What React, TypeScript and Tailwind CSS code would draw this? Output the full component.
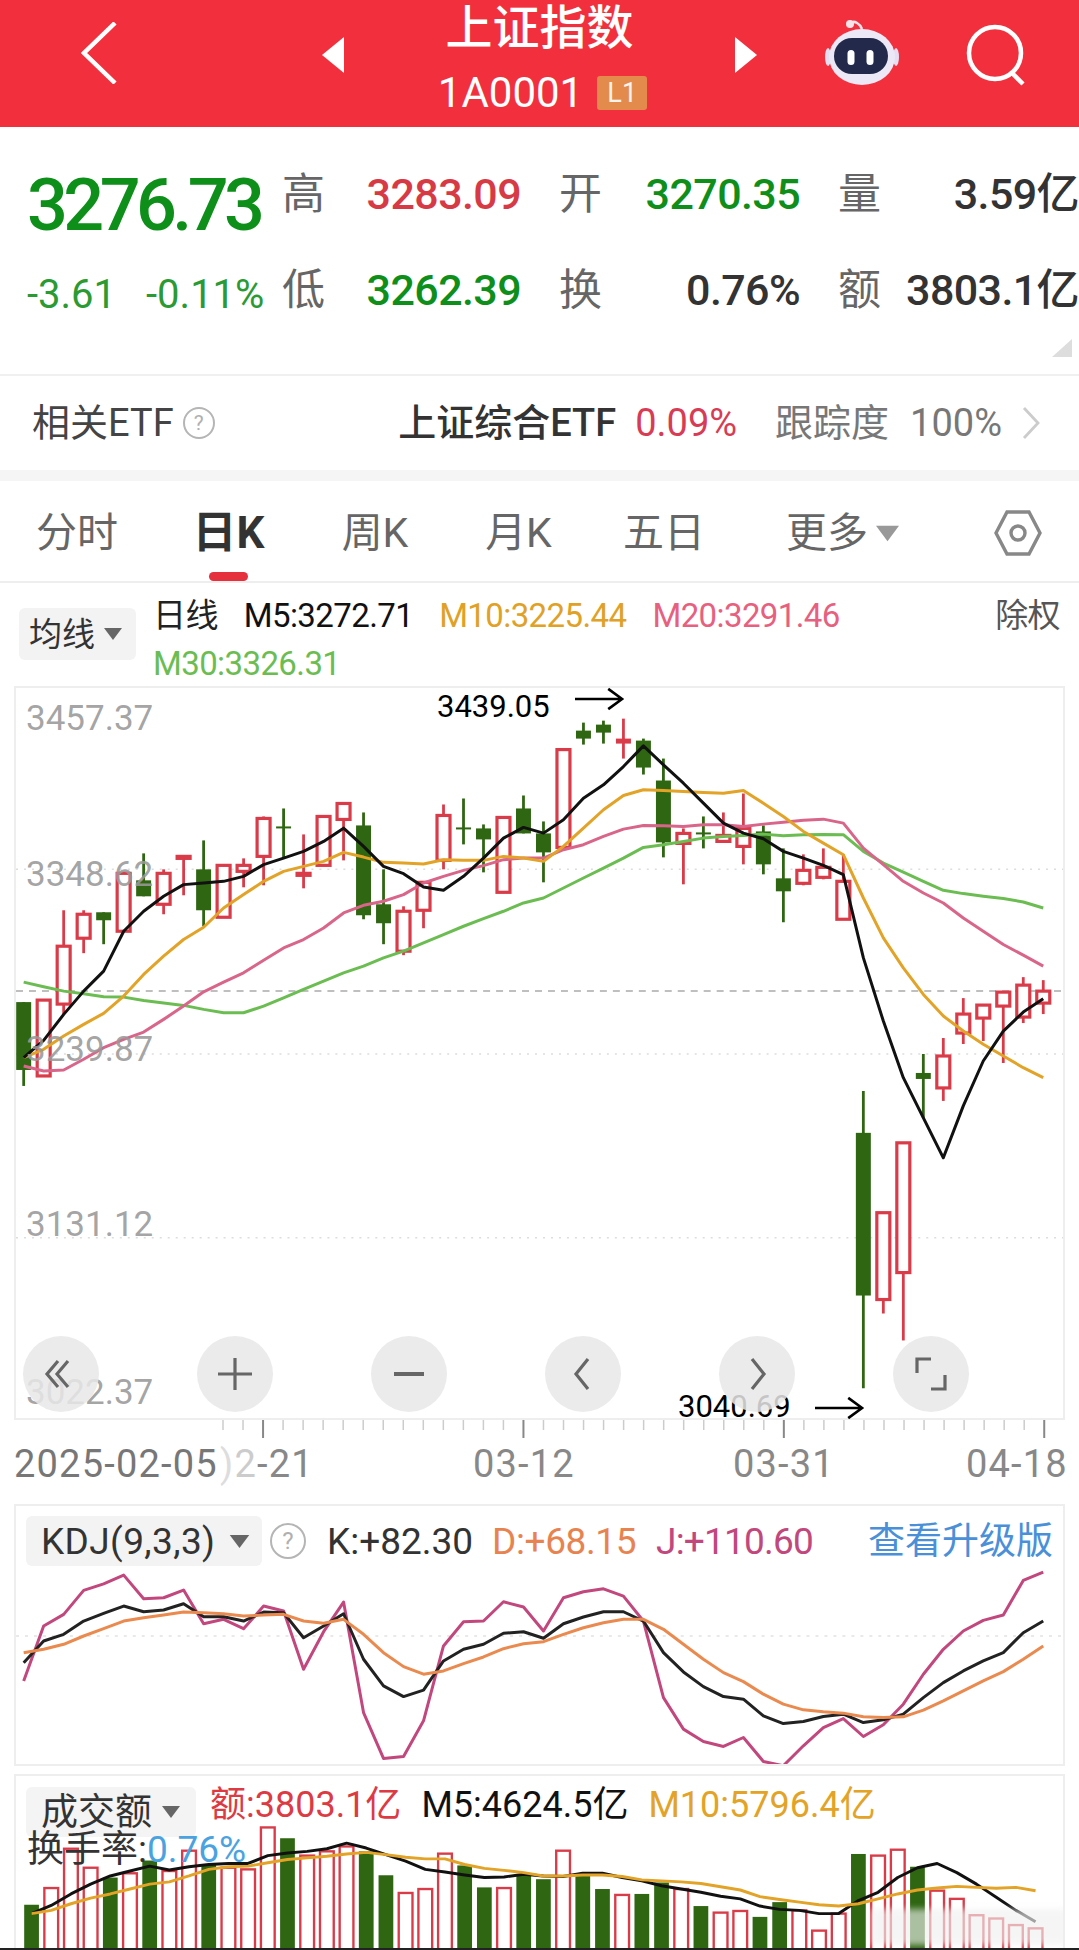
const RED = "#d93b48";
const GREEN = "#2f6612";

// candle x position shared by all three panels
const cx = (i: number) => 22.7 + 20.03 * i;

// kind, high, top, bottom, low (page px)
type Candle = ["g" | "r" | "f", number, number, number, number];
const candles: Candle[] = [
  ["g", 1001, 1001, 1069, 1085], ["r", 999, 999, 1075, 1075], ["r", 909, 945, 1003, 1013], ["r", 909, 913, 937, 952],
  ["g", 911, 911, 919, 943], ["r", 872, 872, 930, 930], ["g", 852, 879, 895, 895], ["r", 868, 872, 903, 913],
  ["r", 855, 855, 857, 894], ["g", 839, 868, 909, 925], ["r", 864, 864, 916, 916], ["r", 857, 864, 870, 886],
  ["r", 815, 817, 855, 884], ["g", 807, 825, 827, 857], ["r", 833, 872, 874, 887], ["r", 815, 815, 864, 864],
  ["r", 802, 802, 818, 859], ["g", 811, 824, 914, 918], ["g", 868, 903, 922, 943], ["r", 905, 910, 950, 954],
  ["r", 880, 881, 909, 927], ["r", 803, 814, 859, 868], ["g", 797, 826, 828, 843], ["g", 823, 827, 838, 871],
  ["r", 816, 816, 891, 891], ["g", 794, 807, 832, 832], ["g", 820, 832, 851, 881], ["r", 748, 748, 846, 846],
  ["g", 721, 729, 737, 743], ["g", 719, 723, 731, 742], ["f", 717, 737, 742, 757], ["g", 737, 739, 766, 773],
  ["g", 757, 779, 841, 856], ["r", 827, 832, 842, 883], ["g", 815, 831, 833, 847], ["r", 811, 834, 840, 840],
  ["r", 792, 827, 845, 863], ["g", 824, 830, 863, 873], ["g", 847, 877, 890, 921], ["r", 853, 869, 882, 884],
  ["r", 847, 866, 876, 878], ["r", 853, 880, 918, 918], ["g", 1090, 1132, 1295, 1388], ["r", 1212, 1212, 1299, 1313],
  ["r", 1142, 1142, 1272, 1340], ["g", 1053, 1072, 1078, 1117], ["r", 1037, 1055, 1087, 1100], ["r", 997, 1013, 1032, 1043],
  ["r", 1003, 1004, 1017, 1040], ["r", 991, 991, 1005, 1062], ["r", 976, 984, 1016, 1022], ["r", 979, 990, 1002, 1013],
];

const toPage = (base: number, v: number) => base + v / 3;

const m5 = [1130, 1078, 1000, 930, 870, 750, 690, 645, 610, 605, 600, 585, 550, 530, 510, 480, 440, 495, 555, 577, 617, 627, 585, 530, 470, 438, 455, 415, 350, 310, 255, 193, 250, 305, 365, 425, 455, 472, 510, 530, 552, 580, 830, 1020, 1190, 1311, 1431, 1275, 1140, 1050, 993, 953];
const m10 = [1130, 1105, 1065, 1030, 997, 945, 880, 825, 775, 738, 680, 640, 600, 570, 555, 540, 513, 527, 543, 545, 548, 535, 537, 537, 525, 530, 540, 495, 440, 385, 342, 325, 327, 330, 333, 335, 327, 365, 405, 450, 485, 520, 650, 770, 860, 940, 1005, 1050, 1090, 1125, 1160, 1190];
const m20 = [1155, 1170, 1167, 1135, 1100, 1075, 1053, 1015, 975, 932, 903, 875, 837, 800, 775, 740, 695, 672, 660, 640, 605, 585, 567, 553, 535, 530, 530, 505, 490, 465, 443, 432, 433, 435, 430, 430, 435, 428, 422, 416, 413, 425, 500, 550, 600, 635, 665, 710, 750, 790, 822, 855];
const m30 = [903, 917, 930, 938, 947, 948, 958, 966, 973, 985, 995, 995, 975, 950, 925, 900, 875, 855, 830, 810, 785, 760, 735, 712, 690, 665, 650, 620, 590, 560, 530, 498, 490, 480, 470, 465, 462, 458, 463, 460, 459, 460, 510, 545, 572, 600, 627, 637, 645, 652, 662, 680];

const kLine = [485, 420, 400, 360, 337, 315, 332, 327, 308, 347, 347, 360, 333, 335, 410, 375, 338, 475, 555, 587, 568, 480, 445, 430, 397, 392, 412, 368, 348, 332, 332, 360, 455, 513, 557, 587, 595, 645, 668, 662, 647, 640, 665, 657, 640, 590, 545, 510, 480, 455, 395, 360];
const dLine = [455, 445, 430, 405, 383, 360, 350, 342, 333, 335, 338, 345, 342, 340, 360, 367, 355, 400, 455, 497, 520, 510, 488, 468, 443, 428, 422, 400, 380, 365, 355, 355, 385, 430, 475, 515, 542, 580, 610, 627, 633, 637, 648, 650, 648, 628, 600, 570, 540, 512, 475, 435];
const jLine = [540, 375, 340, 268, 248, 222, 293, 290, 267, 368, 355, 383, 315, 330, 505, 392, 303, 635, 773, 767, 660, 435, 362, 360, 302, 318, 390, 290, 272, 263, 285, 360, 590, 685, 722, 737, 710, 782, 795, 735, 680, 653, 707, 672, 610, 520, 445, 390, 358, 342, 238, 213];

// true = green solid bar
const volumes: [boolean, number][] = [
  [true, 1218], [false, 1167], [false, 1047], [false, 1105], [true, 1135], [false, 1122], [true, 1083], [false, 1115], [false, 1053], [true, 1095],
  [false, 1105], [false, 1110], [false, 982], [true, 1015], [false, 1068], [false, 1055], [false, 1040], [true, 1055], [true, 1128], [false, 1182],
  [false, 1170], [false, 1062], [true, 1098], [true, 1165], [false, 1167], [true, 1125], [true, 1140], [false, 1053], [true, 1130], [true, 1170],
  [false, 1188], [true, 1185], [true, 1150], [false, 1170], [true, 1222], [false, 1242], [false, 1237], [true, 1255], [true, 1210], [false, 1235],
  [false, 1297], [false, 1245], [true, 1063], [false, 1068], [false, 1050], [true, 1102], [false, 1175], [false, 1200], [false, 1250], [false, 1260],
  [false, 1280], [false, 1290],
];
const volM5 = [1245, 1220, 1185, 1155, 1130, 1115, 1100, 1112, 1102, 1095, 1092, 1092, 1068, 1060, 1055, 1047, 1030, 1045, 1065, 1085, 1110, 1118, 1127, 1135, 1133, 1125, 1130, 1132, 1122, 1122, 1135, 1145, 1160, 1170, 1180, 1192, 1200, 1222, 1232, 1235, 1245, 1245, 1205, 1180, 1135, 1105, 1092, 1120, 1155, 1195, 1235, 1270];
const volM10 = [1245, 1235, 1215, 1198, 1185, 1170, 1155, 1148, 1130, 1110, 1102, 1100, 1090, 1080, 1075, 1070, 1063, 1058, 1065, 1073, 1078, 1078, 1095, 1107, 1113, 1120, 1130, 1130, 1127, 1127, 1132, 1142, 1145, 1148, 1153, 1163, 1173, 1193, 1202, 1210, 1218, 1222, 1215, 1200, 1185, 1173, 1167, 1162, 1165, 1168, 1165, 1175];

function Series({ data, base, color, width = 3 }: { data: number[]; base: number; color: string; width?: number }) {
  const points = data.map((v, i) => `${cx(i).toFixed(1)},${toPage(base, v).toFixed(1)}`).join(" ");
  return <polyline points={points} fill="none" stroke={color} strokeWidth={width} strokeLinejoin="round" />;
}

function Caret({ className }: { className: string }) {
  return (
    <svg viewBox="0 0 18 12" className={className}>
      <path d="M0 0h18L9 12Z" fill="currentColor" />
    </svg>
  );
}

function QuestionMark({ className }: { className: string }) {
  return (
    <span className={`flex items-center justify-center rounded-full border-2 border-[#b5b5b5] text-[#b0b0b0] ${className}`}>
      ?
    </span>
  );
}

function Stat({ label, value, color }: { label: string; value: string; color: string }) {
  return (
    <div className="flex h-12 items-center justify-between">
      <span className="text-[43px] leading-none text-[#666]">{label}</span>
      <span className={`text-[43px] font-medium leading-none tracking-[-0.6px] ${color}`}>{value}</span>
    </div>
  );
}

function Arrow({ className }: { className: string }) {
  return (
    <svg viewBox="0 0 52 26" className={className} fill="none" stroke="#000" strokeWidth="2.8">
      <path d="M0 13h50M36 2l15 11-15 11" />
    </svg>
  );
}

function RoundButton({ children }: { children: React.ReactNode }) {
  return (
    <div className="flex h-[76px] w-[76px] items-center justify-center rounded-full bg-[#e8e8e8]/85">
      <svg viewBox="0 0 40 40" className="h-10 w-10" fill="none" stroke="#666" strokeWidth="3.2">
        {children}
      </svg>
    </div>
  );
}

function PriceLabel({ y, children }: { y: string; children: string }) {
  return <span className={`absolute left-[10px] text-[35px] leading-none text-[#999]/90 ${y}`}>{children}</span>;
}

function PriceChart() {
  return (
    <div className="relative mx-[14px] h-[734px] border-2 border-[#eee]">
      <svg viewBox="15 687 1049 730" className="absolute inset-0 block h-full w-full">
        {[868, 1053, 1237].map((y) => (
          <line key={y} x1="15" x2="1064" y1={y} y2={y} stroke="#ddd" strokeWidth="1.5" strokeDasharray="2 6" />
        ))}
        <line x1="15" x2="1064" y1="990" y2="990" stroke="#aaa" strokeWidth="1.5" strokeDasharray="7 6" />
        {candles.map(([kind, high, top, bottom, low], i) => {
          const x = cx(i);
          const color = kind === "g" ? GREEN : RED;
          return (
            <g key={i}>
              <line x1={x} x2={x} y1={high} y2={low} stroke={color} strokeWidth="2.8" />
              {kind === "r" ? (
                <rect x={x - 6.5} y={top} width="13" height={bottom - top} fill="#fff" stroke={color} strokeWidth="3.2" />
              ) : (
                <rect x={x - 7.5} y={top} width="15" height={bottom - top} fill={color} />
              )}
            </g>
          );
        })}
        <Series data={m30} base={680} color="#6bbd52" />
        <Series data={m20} base={680} color="#d9668a" />
        <Series data={m10} base={680} color="#e2a326" />
        <Series data={m5} base={680} color="#111" />
      </svg>

      <PriceLabel y="top-[13px]">3457.37</PriceLabel>
      <PriceLabel y="top-[169px]">3348.62</PriceLabel>
      <PriceLabel y="top-[344px]">3239.87</PriceLabel>
      <PriceLabel y="top-[519px]">3131.12</PriceLabel>
      <PriceLabel y="top-[687px]">3022.37</PriceLabel>

      <span className="absolute left-[421px] top-[3px] text-[31px] leading-[32px] text-black">3439.05</span>
      <Arrow className="absolute left-[557px] top-[-1px] h-6 w-[52px]" />

      <span className="absolute left-[662px] top-[703px] text-[31px] leading-[32px] text-black">3040.69</span>
      <Arrow className="absolute left-[797px] top-[708px] h-6 w-[52px]" />

      {/* zoom and pan buttons float over the chart */}
      <div className="absolute left-[7px] top-[648px] flex gap-[98px]">
        <RoundButton>
          <path d="M17 7 6 20l11 13M27 7 16 20l11 13" />
        </RoundButton>
        <RoundButton>
          <path d="M20 4v32M3 20h34" />
        </RoundButton>
        <RoundButton>
          <path d="M5 20h30" strokeWidth="4" />
        </RoundButton>
        <RoundButton>
          <path d="M25 5 13 20l12 15" />
        </RoundButton>
        <RoundButton>
          <path d="m15 5 12 15-12 15" />
        </RoundButton>
        <RoundButton>
          <path d="M20 5H6v14M20 35h14V21" />
        </RoundButton>
      </div>
    </div>
  );
}

function DateAxis() {
  const ticks = Array.from({ length: 42 }, (_, i) => 223 + i * 20.03);
  return (
    <div className="h-[84px]">
      <svg viewBox="0 0 1079 20" className="block h-5 w-full">
        {ticks.map((x, i) => (
          <line key={i} x1={x} x2={x} y1="0" y2={(i - 2) % 13 === 0 ? 18 : 10} stroke={(i - 2) % 13 === 0 ? "#888" : "#ccc"} strokeWidth={(i - 2) % 13 === 0 ? 2 : 1.5} />
        ))}
      </svg>
      <div className="mx-[14px] mt-[5px] grid grid-cols-[206px_253px_260px_233px_1fr] whitespace-nowrap text-[38px] leading-[38px] tracking-[1.2px] text-[#888]">
        <span className="text-[#777]">2025-02-05</span>
        <span>
          <span className="text-[#ddd]">)</span>
          <span className="text-[#ccc]">2</span>-21
        </span>
        <span>03-12</span>
        <span>03-31</span>
        <span>04-18</span>
      </div>
    </div>
  );
}

function KdjPanel() {
  return (
    <div className="relative mx-[14px] h-[262px] border-2 border-[#eee]">
      <svg viewBox="15 1505 1049 258" className="absolute inset-0 block h-full w-full">
        <line x1="15" x2="1064" y1="1635" y2="1635" stroke="#e2e2e2" strokeWidth="1.5" strokeDasharray="3 6" />
        <Series data={jLine} base={1500} color="#c2477d" />
        <Series data={kLine} base={1500} color="#222" />
        <Series data={dLine} base={1500} color="#ea8a4f" />
      </svg>
      <div className="relative flex items-center whitespace-nowrap pl-[10px] pt-[10px] text-[37px] leading-none">
        <div className="flex h-[50px] w-[236px] items-center gap-[14px] rounded-md bg-[#f3f3f3] pl-[15px] tracking-[0.4px] text-[#333]">
          <span>KDJ(9,3,3)</span>
          <Caret className="h-[13px] w-[21px] text-[#666]" />
        </div>
        <QuestionMark className="ml-[8px] h-[36px] w-[36px] text-[24px]" />
        <span className="ml-[21px] text-[#333]">K:+82.30</span>
        <span className="ml-[19px] tracking-[-0.4px] text-[#e8834f]">D:+68.15</span>
        <span className="ml-[20px] tracking-[-0.8px] text-[#c2477d]">J:+110.60</span>
        <span className="ml-auto pr-[10px] text-[#4a90d9]">查看升级版</span>
      </div>
    </div>
  );
}

function VolumePanel() {
  return (
    <div className="relative mx-[14px] mt-[8px] flex-1 overflow-hidden border-x-2 border-t-2 border-[#eee]">
      <svg viewBox="15 1775 1049 175" className="absolute inset-0 block h-full w-full">
        {volumes.map(([solid, top], i) => {
          const y = toPage(1500, top);
          const x = cx(i);
          return solid ? (
            <rect key={i} x={x - 7.5} y={y} width="15" height={1950 - y} fill={GREEN} />
          ) : (
            <rect key={i} x={x - 7} y={y} width="14" height={1960 - y} fill="#fff" stroke={RED} strokeWidth="2.4" />
          );
        })}
        <Series data={volM5} base={1500} color="#111" />
        <Series data={volM10} base={1500} color="#e2a326" />
      </svg>

      <div className="relative flex items-start whitespace-nowrap pl-[10px] pt-[11px] leading-none">
        <div className="flex h-[50px] w-[170px] items-center gap-[10px] rounded-md bg-[#f3f3f3]/90 pl-[15px] text-[#333]">
          <span className="text-[37px]">成交额</span>
          <Caret className="h-3 w-[18px] text-[#666]" />
        </div>
        <div className="ml-[14px] flex gap-[20px] text-[36px]">
          <span className="text-[#dd3a44]">额:3803.1亿</span>
          <span className="text-[#111]">M5:4624.5亿</span>
          <span className="text-[#e2a326]">M10:5796.4亿</span>
        </div>
      </div>
      <div className="absolute left-[11px] top-[52px] text-[37px] leading-[44px] text-[#333]">
        换手率:<span className="text-[#4aa3e0]">0.76%</span>
      </div>

      {/* blurred stamp in the bottom corner */}
      <div className="absolute bottom-[3px] right-[-4px] h-[36px] w-[196px] bg-[#eef0ee]/65 blur-[3px]" />
    </div>
  );
}

export default function App() {
  return (
    <main className="flex h-[1950px] w-[1079px] flex-col overflow-hidden bg-white font-[Roboto,'Noto_Sans_CJK_SC',sans-serif] text-[#333]">
      {/* Top bar */}
      <header className="relative flex h-[127px] items-start justify-between bg-[#f2303d] text-white">
        <svg viewBox="0 0 36 62" className="ml-[81px] mt-[22px] h-[62px] w-9" fill="none" stroke="#fff" strokeWidth="4.5">
          <path d="M34 1 3 31l31 30" />
        </svg>
        <svg viewBox="0 0 22 36" className="absolute left-[322px] top-[37px] h-9 w-[22px]">
          <path d="M22 0v36L0 18Z" fill="#fff" />
        </svg>
        <div className="absolute left-0 right-0 top-[5px] flex flex-col items-center">
          <span className="text-[47px] font-medium leading-[46px]">上证指数</span>
          <div className="mt-[25px] flex items-center gap-[14px] pl-[6px]">
            <span className="text-[42px] leading-[34px]">1A0001</span>
            <span className="flex h-[34px] w-[50px] items-center justify-center rounded-[3px] bg-[#e38b4c] text-[27px] leading-none text-white/90">L1</span>
          </div>
        </div>
        <svg viewBox="0 0 22 36" className="absolute left-[735px] top-[37px] h-9 w-[22px]">
          <path d="M0 0v36l22-18Z" fill="#fff" />
        </svg>
        <svg viewBox="0 0 76 68" className="absolute left-[824px] top-[19px] h-[68px] w-[76px]">
          <path d="M26 5c4-5 10 0 12 5" fill="none" stroke="#f4e4ea" strokeWidth="2.5" />
          <circle cx="26" cy="5" r="4" fill="#f4e4ea" />
          <ellipse cx="4" cy="38" rx="3" ry="9" fill="#e4def2" />
          <ellipse cx="72" cy="38" rx="3" ry="9" fill="#e4def2" />
          <ellipse cx="38" cy="38" rx="33" ry="28" fill="#ece8f6" />
          <rect x="10" y="19" width="54" height="36" rx="18" fill="#22294a" />
          <rect x="23.5" y="31" width="7" height="15" rx="3.5" fill="#fff" />
          <rect x="42.5" y="31" width="7" height="15" rx="3.5" fill="#fff" />
        </svg>
        <svg viewBox="0 0 62 62" className="absolute left-[965px] top-[24px] h-[62px] w-[62px]" fill="none" stroke="#fff" strokeWidth="4.5">
          <circle cx="30" cy="29" r="26" />
          <path d="m47 49 11 11" />
        </svg>
      </header>

      {/* Quote */}
      <section className="relative flex h-[247px] pt-[19px]">
        <div className="w-[283px] pl-[27px]">
          <div className="flex h-[120px] items-center text-[72px] font-medium leading-none tracking-[-4.6px] text-[#0e8f1a]">3276.73</div>
          <div className="flex h-[58px] items-center gap-[30px] text-[40px] leading-none text-[#2a9a33]">
            <span>-3.61</span>
            <span>-0.11%</span>
          </div>
        </div>
        <div className="grid h-fit grid-cols-[239px_241px_241px] gap-x-[38px] gap-y-12 pt-6">
          <Stat label="高" value="3283.09" color="text-[#d83a45]" />
          <Stat label="开" value="3270.35" color="text-[#0e8f1a]" />
          <Stat label="量" value="3.59亿" color="text-[#333]" />
          <Stat label="低" value="3262.39" color="text-[#0e8f1a]" />
          <Stat label="换" value="0.76%" color="text-[#333]" />
          <Stat label="额" value="3803.1亿" color="text-[#333]" />
        </div>
        <svg viewBox="0 0 20 18" className="absolute bottom-[17px] right-[7px] h-[18px] w-5">
          <path d="M20 0v18H0Z" fill="#ddd" />
        </svg>
      </section>

      {/* Related ETF */}
      <section className="flex h-[96px] items-center whitespace-nowrap border-t-2 border-[#f0f0f0] pl-[32px] pr-[39px] text-[38px] leading-none">
        <span className="text-[#444]">相关ETF</span>
        <QuestionMark className="ml-[9px] h-8 w-8 text-[21px]" />
        <span className="ml-auto font-medium text-[#333]">上证综合ETF</span>
        <span className="ml-[19px] text-[#d93b55]">0.09%</span>
        <span className="ml-[38px] text-[#777]">跟踪度</span>
        <span className="ml-[21px] text-[#777]">100%</span>
        <svg viewBox="0 0 18 32" className="ml-[20px] h-8 w-[18px]" fill="none" stroke="#ccc" strokeWidth="2.8">
          <path d="m2 1 14 15L2 31" />
        </svg>
      </section>
      <div className="h-[11px] bg-[#f5f5f5]" />

      {/* Period tabs */}
      <nav className="flex h-[102px] items-center border-b-2 border-[#eee] pt-1 text-[41px] leading-none text-[#666]">
        <span className="w-[154px] text-center">分时</span>
        <span className="relative flex h-full w-[149px] items-center justify-center text-[44px] font-bold text-[#333]">
          日K
          <span className="absolute bottom-0 left-[55px] h-[9px] w-[39px] rounded-full bg-[#e5303d]" />
        </span>
        <span className="w-[144px] text-center">周K</span>
        <span className="w-[143px] text-center">月K</span>
        <span className="w-[148px] text-center">五日</span>
        <span className="ml-[48px] flex items-center gap-[8px]">
          更多
          <Caret className="h-[17px] w-[23px] text-[#999]" />
        </span>
        <svg viewBox="0 0 48 46" className="ml-[95px] h-[46px] w-12" fill="none" stroke="#888" strokeWidth="3.4">
          <path d="M13 2h22l11 21-11 21H13L2 23Z" />
          <circle cx="24" cy="23" r="7" />
        </svg>
      </nav>

      {/* Moving averages legend */}
      <section className="flex h-[103px] items-start whitespace-nowrap pl-[19px] pt-[17px] text-[33px] leading-none">
        <div className="mt-[8px] flex h-[52px] w-[117px] items-center gap-[9px] rounded-md bg-[#f3f3f3] pl-[10px]">
          <span className="text-[#333]">均线</span>
          <Caret className="h-3 w-[18px] text-[#666]" />
        </div>
        <div className="ml-[17px] flex flex-1 flex-col gap-[17px]">
          <div className="flex h-[30px] items-center gap-[26px] pr-[19px] tracking-[-0.6px]">
            <span className="text-[#222]">日线</span>
            <span className="text-[#111]">M5:3272.71</span>
            <span className="text-[#e0a125]">M10:3225.44</span>
            <span className="text-[#e8607f]">M20:3291.46</span>
            <span className="ml-auto text-[#555]">除权</span>
          </div>
          <span className="h-[26px] tracking-[-0.6px] text-[#6bbd52]">M30:3326.31</span>
        </div>
      </section>

      <PriceChart />
      <DateAxis />
      <KdjPanel />
      <VolumePanel />
      <div className="h-[2px] bg-[#222]" />
    </main>
  );
}
